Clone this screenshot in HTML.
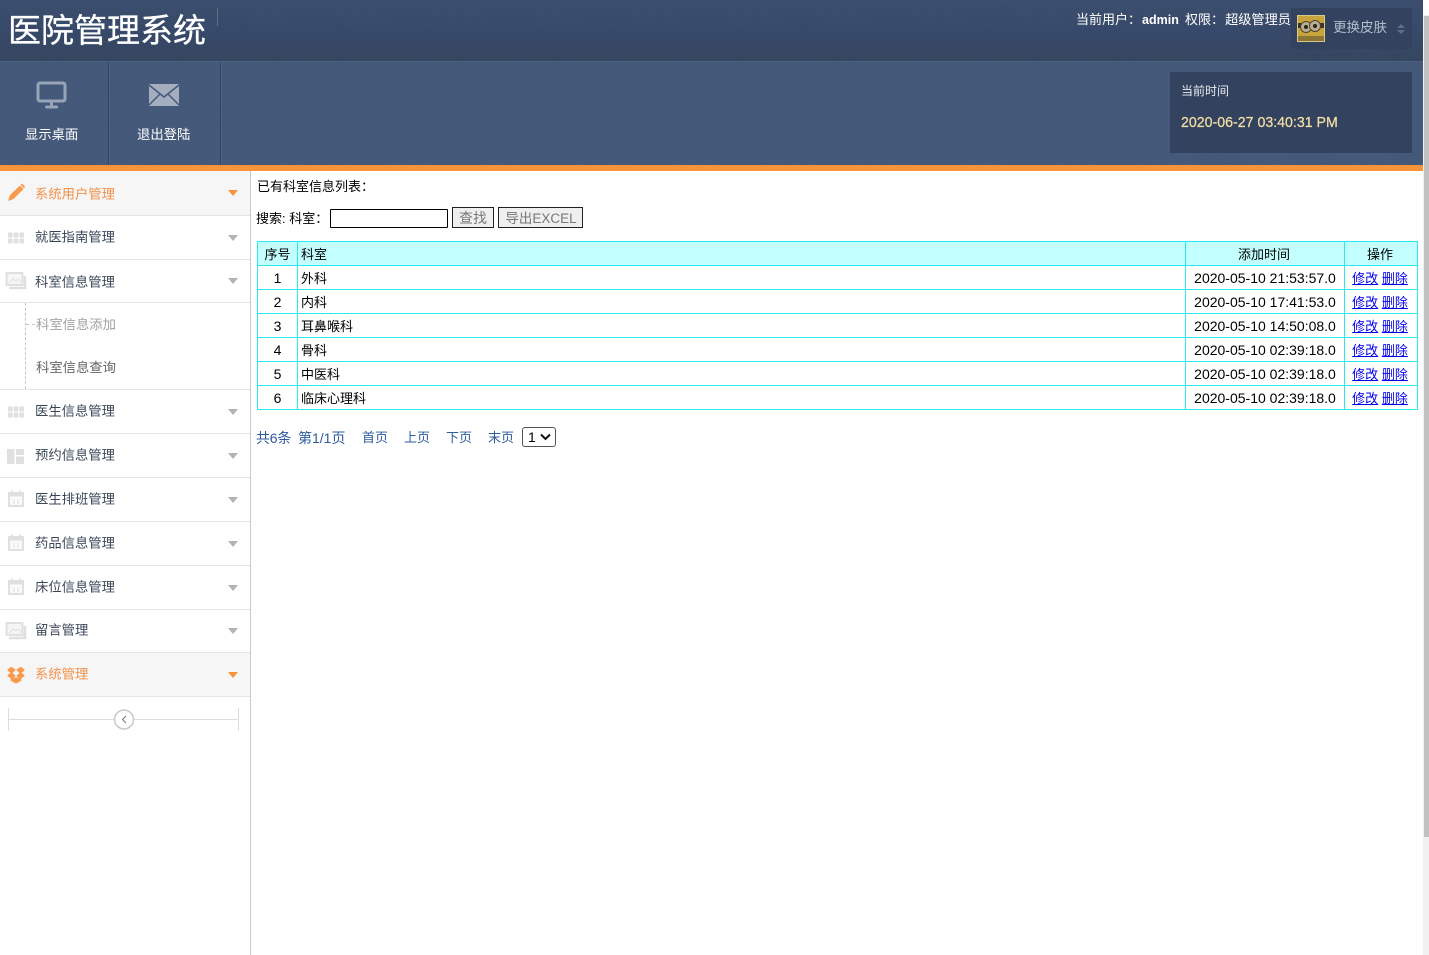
<!DOCTYPE html>
<html lang="zh-CN">
<head>
<meta charset="utf-8">
<title>医院管理系统</title>
<style>
*{box-sizing:border-box}
html,body{margin:0;padding:0;width:1429px;height:955px;overflow:hidden;background:#fff;font-family:"Liberation Sans","Noto Sans CJK SC",sans-serif;font-size:13px;color:#000}
.abs{position:absolute;white-space:nowrap}
#top{position:absolute;left:0;top:0;width:1423px;height:61px;background:repeating-linear-gradient(45deg,rgba(255,255,255,.018) 0 1px,rgba(0,0,0,.018) 1px 2px),linear-gradient(#3b4d6d,#36486a 50%,#34455f)}
#bar{position:absolute;left:0;top:61px;width:1423px;height:104px;background:repeating-linear-gradient(45deg,rgba(255,255,255,.025) 0 1px,rgba(0,0,0,.025) 1px 2px),#43587a;border-top:1px solid #4d6180}
#orange{position:absolute;left:0;top:165px;width:1423px;height:6px;background:#f79439}
.vl{position:absolute;width:1px;background:#34456a;box-shadow:1px 0 0 #4d6288}
#side{position:absolute;left:0;top:171px;width:251px;height:784px;background:#fff;border-right:1px solid #c8c8c8}
.m{position:absolute;left:0;width:250px;border-bottom:1px solid #e5e5e5;color:#3a4658;font-size:13.33px}
.m.on{background:#f6f6f6;color:#f2914a}
.m span{position:absolute;left:35px;top:50%;transform:translateY(-50%);margin-top:-2px;white-space:nowrap}
.m i{position:absolute;left:228px;top:50%;margin-top:-3px;width:0;height:0;border-left:5.5px solid transparent;border-right:5.5px solid transparent;border-top:6px solid #b3b3b3}
.m.on i{border-top-color:#f79439}
.m svg{position:absolute;left:5px;top:50%;margin-top:-11px}
table{position:absolute;left:257px;top:241px;width:1161px;border-collapse:separate;border-spacing:0;table-layout:fixed;font-size:13px}
td{height:24px;padding:1px 3px 0;white-space:nowrap;line-height:21px;overflow:hidden}
tr:first-child td{background:#c4ffff;height:25px;padding-top:2px}
tr:first-child td:first-child{font-size:13px}
tr+tr td:first-child{font-size:14px;padding-top:0;line-height:22px}
.c{text-align:center}
.d{font-size:14px;padding-top:0;padding-right:4px;line-height:22px}
.e{padding-right:6px}
td a{color:#0000ee;text-decoration:underline}
.h{position:absolute;left:257px;width:1161px;height:1px;background:#2de8ec}
.w{position:absolute;top:241px;width:1px;height:169px;background:#2de8ec}
.pg{position:absolute;top:429px;color:#2e5a9e;font-size:13px;line-height:18px;white-space:nowrap}
.btn{position:absolute;top:207px;height:21px;background:#efefef;border:1px solid #222;color:#777;line-height:20px;text-align:center;white-space:nowrap}
#sb{position:absolute;left:1423px;top:0;width:6px;height:955px;background:#f1f1f1}
#sbt{position:absolute;left:1424px;top:16px;width:5px;height:821px;background:#c1c1c1}
</style>
</head>
<body>
<div id="top"></div>
<div id="bar"></div>
<div id="orange"></div>
<div class="vl" style="left:108px;top:62px;height:103px"></div>
<div class="vl" style="left:220px;top:62px;height:103px"></div>
<div class="vl" style="left:217px;top:8px;height:18px;background:#5c6d88;box-shadow:none"></div>

<div class="abs" style="left:8px;top:10px;font-size:33px;line-height:42px;color:#fff;-webkit-text-stroke:.3px #fff">医院管理系统</div>

<svg class="abs" style="left:36px;top:81px" width="32" height="28" viewBox="0 0 32 28"><rect x="2" y="2" width="27" height="18" rx="2" fill="none" stroke="#98a4b8" stroke-width="3"/><rect x="14" y="20" width="3" height="5" fill="#98a4b8"/><rect x="9" y="24.500" width="13" height="3" rx="1.500" fill="#98a4b8"/></svg>
<svg class="abs" style="left:149px;top:84px" width="30" height="23" viewBox="0 0 30 23"><rect width="30" height="22" fill="#a4aebf"/><path d="M0 1L15 13L30 1M0 21L11 10M30 21L19 10" fill="none" stroke="#43587a" stroke-width="1.500"/></svg>
<div class="abs" style="left:25px;top:126px;color:#fff;font-size:13.33px;line-height:18px">显示桌面</div>
<div class="abs" style="left:137px;top:126px;color:#fff;font-size:13.33px;line-height:18px">退出登陆</div>

<div class="abs" style="left:1076px;top:11px;color:#fff;font-size:13px;line-height:18px">当前用户：<b style="font-weight:700;font-size:12.500px;margin-left:1px;margin-right:-1px">admin</b>&nbsp; 权限：<span style="font-size:13.2px;margin-left:1px">超级管理员</span></div>
<div class="abs" style="left:1291px;top:8px;width:121px;height:41px;background:#33425f"></div>
<svg class="abs" style="left:1297px;top:15px" width="28" height="27" viewBox="0 0 28 27"><rect width="28" height="27" fill="#d8c98a"/><rect x="1" y="1" width="26" height="25" fill="#c9a43c"/><rect x="1" y="8" width="26" height="5" fill="#3c3322"/><circle cx="9" cy="12" r="5.500" fill="#b9ae94" stroke="#4d4630"/><circle cx="18" cy="11" r="5.500" fill="#b9ae94" stroke="#4d4630"/><circle cx="9" cy="12" r="2" fill="#2a2416"/><circle cx="18" cy="11" r="2" fill="#2a2416"/><rect x="1" y="21" width="26" height="5" fill="#8b7434"/></svg>
<div class="abs" style="left:1333px;top:19px;color:#b4bdcb;font-size:13.500px;line-height:18px">更换皮肤</div>
<div class="abs" style="left:1397px;top:24px;width:0;height:0;border-left:4px solid transparent;border-right:4px solid transparent;border-bottom:4px solid #5f6f8a"></div>
<div class="abs" style="left:1397px;top:30px;width:0;height:0;border-left:4px solid transparent;border-right:4px solid transparent;border-top:4px solid #5f6f8a"></div>

<div class="abs" style="left:1170px;top:72px;width:242px;height:81px;background:#33425f"></div>
<div class="abs" style="left:1181px;top:83px;color:#e8ebf0;font-size:12px;line-height:17px">当前时间</div>
<div class="abs" style="left:1181px;top:114px;color:#f2dfa4;font-size:15px;line-height:18px;transform:scaleX(.945);transform-origin:0 0;-webkit-text-stroke:.25px #f2dfa4">2020-06-27 03:40:31 PM</div>

<div id="side"></div>
<div class="m on" style="top:171px;height:45px"><svg width="22" height="22" viewBox="0 0 22 22"><path d="M3 19L5 13L15 3.500L18.500 7L8.500 17Z" fill="#f79a4c"/><path d="M15.500 2.500L17 1.500L20 4.500L19 6.500Z" fill="#f79a4c"/></svg><span style="margin-top:0">系统用户管理</span><i></i></div>
<div class="m" style="top:216px;height:44px"><svg width="22" height="22" viewBox="0 0 22 22" fill="#e0e0e0"><rect x="3" y="5.500" width="4.600" height="5"/><rect x="8.700" y="5.500" width="4.600" height="5"/><rect x="14.400" y="5.500" width="4.600" height="5"/><rect x="3" y="11.500" width="4.600" height="5"/><rect x="8.700" y="11.500" width="4.600" height="5"/><rect x="14.400" y="11.500" width="4.600" height="5"/></svg><span>就医指南管理</span><i></i></div>
<div class="m" style="top:260px;height:43px"><svg width="22" height="22" viewBox="0 0 22 22" fill="none" stroke="#e0e0e0"><path d="M4 18H20V6" stroke-width="2.500"/><rect x="1.500" y="3" width="16" height="12" stroke-width="2" fill="#f5f5f5"/><path d="M4 13L8 9L11 11L13 9L16 12" stroke-width="1"/></svg><span style="margin-top:0">科室信息管理</span><i></i></div>
<div class="abs" style="left:25px;top:303px;height:86px;border-left:1px dashed #c6c6c6"></div>
<div class="abs" style="left:26px;top:324px;width:9px;border-top:1px dashed #c6c6c6"></div>
<div class="abs" style="left:36px;top:316px;color:#a3a3a3;font-size:13.33px;line-height:18px">科室信息添加</div>
<div class="abs" style="left:36px;top:359px;color:#666;font-size:13.33px;line-height:18px">科室信息查询</div>
<div class="abs" style="left:0;top:389px;width:250px;border-top:1px solid #e5e5e5"></div>
<div class="m" style="top:390px;height:44px"><svg width="22" height="22" viewBox="0 0 22 22" fill="#e0e0e0"><rect x="3" y="5.500" width="4.600" height="5"/><rect x="8.700" y="5.500" width="4.600" height="5"/><rect x="14.400" y="5.500" width="4.600" height="5"/><rect x="3" y="11.500" width="4.600" height="5"/><rect x="8.700" y="11.500" width="4.600" height="5"/><rect x="14.400" y="11.500" width="4.600" height="5"/></svg><span>医生信息管理</span><i></i></div>
<div class="m" style="top:434px;height:44px"><svg width="22" height="22" viewBox="0 0 22 22" fill="#e0e0e0"><rect x="2" y="4" width="7.500" height="15"/><rect x="11" y="4" width="8" height="6"/><rect x="11" y="11.500" width="8" height="7.500"/></svg><span>预约信息管理</span><i></i></div>
<div class="m" style="top:478px;height:44px"><svg width="22" height="22" viewBox="0 0 22 22" fill="#fafafa" stroke="#e0e0e0" stroke-width="2"><rect x="4" y="4" width="14" height="13"/><path d="M4 6H18" stroke-width="3"/><path d="M7 1.500V4M15 1.500V4"/><path d="M9 10V15M13 10V15" stroke-width="1"/></svg><span>医生排班管理</span><i></i></div>
<div class="m" style="top:522px;height:44px"><svg width="22" height="22" viewBox="0 0 22 22" fill="#fafafa" stroke="#e0e0e0" stroke-width="2"><rect x="4" y="4" width="14" height="13"/><path d="M4 6H18" stroke-width="3"/><path d="M7 1.500V4M15 1.500V4"/><path d="M9 10V15M13 10V15" stroke-width="1"/></svg><span>药品信息管理</span><i></i></div>
<div class="m" style="top:566px;height:44px"><svg width="22" height="22" viewBox="0 0 22 22" fill="#fafafa" stroke="#e0e0e0" stroke-width="2"><rect x="4" y="4" width="14" height="13"/><path d="M4 6H18" stroke-width="3"/><path d="M7 1.500V4M15 1.500V4"/><path d="M9 10V15M13 10V15" stroke-width="1"/></svg><span>床位信息管理</span><i></i></div>
<div class="m" style="top:610px;height:43px"><svg width="22" height="22" viewBox="0 0 22 22" fill="none" stroke="#e0e0e0"><path d="M4 18H20V6" stroke-width="2.500"/><rect x="1.500" y="3" width="16" height="12" stroke-width="2" fill="#f5f5f5"/><path d="M4 13L8 9L11 11L13 9L16 12" stroke-width="1"/></svg><span>留言管理</span><i></i></div>
<div class="m on" style="top:653px;height:44px"><svg width="22" height="22" viewBox="0 0 22 22" fill="#f79a4c" stroke="#f79a4c" stroke-width="2" stroke-linejoin="round"><path d="M3.500 6L6.500 4L9.500 6L6.500 8.500Z"/><path d="M18.500 6L15.500 4L12.500 6L15.500 8.500Z"/><path d="M3.500 11.500L6.500 9.500L9.500 12L6.500 14Z"/><path d="M18.500 11.500L15.500 9.500L12.500 12L15.500 14Z"/><path d="M6.500 16L11 14.500L15.500 16L11 18.500Z"/></svg><span>系统管理</span><i></i></div>

<div class="abs" style="left:8px;top:708px;height:23px;border-left:1px solid #ddd"></div>
<div class="abs" style="left:238px;top:708px;height:23px;border-left:1px solid #ddd"></div>
<div class="abs" style="left:8px;top:719px;width:230px;border-top:1px solid #ddd"></div>
<svg class="abs" style="left:113px;top:708px" width="22" height="22" viewBox="0 0 22 22"><circle cx="11" cy="11.500" r="9.500" fill="#fff" stroke="#c9c9c9" stroke-width="1.500"/><path d="M13 8L9.500 11.500L13 15" fill="none" stroke="#777" stroke-width="1"/></svg>

<div class="abs" style="left:257px;top:178px;font-size:13px;line-height:18px">已有科室信息列表：</div>
<div class="abs" style="left:256px;top:210px;font-size:13px;line-height:18px">搜索: 科室：</div>
<div class="abs" style="left:330px;top:209px;width:118px;height:19px;border:1px solid #000;border-radius:1px;background:#fff"></div>
<div class="btn" style="left:452px;width:42px;font-size:14px">查找</div>
<div class="btn" style="left:498px;width:85px;font-size:13.500px;line-height:21px;padding-left:1px">导出EXCEL</div>

<table>
<colgroup><col style="width:41px"><col style="width:888px"><col style="width:159px"><col style="width:73px"></colgroup>
<tr><td class="c">序号</td><td>科室</td><td class="c e">添加时间</td><td class="c e">操作</td></tr>
<tr><td class="c">1</td><td>外科</td><td class="c d">2020-05-10 21:53:57.0</td><td class="c e"><a>修改</a> <a>删除</a></td></tr>
<tr><td class="c">2</td><td>内科</td><td class="c d">2020-05-10 17:41:53.0</td><td class="c e"><a>修改</a> <a>删除</a></td></tr>
<tr><td class="c">3</td><td>耳鼻喉科</td><td class="c d">2020-05-10 14:50:08.0</td><td class="c e"><a>修改</a> <a>删除</a></td></tr>
<tr><td class="c">4</td><td>骨科</td><td class="c d">2020-05-10 02:39:18.0</td><td class="c e"><a>修改</a> <a>删除</a></td></tr>
<tr><td class="c">5</td><td>中医科</td><td class="c d">2020-05-10 02:39:18.0</td><td class="c e"><a>修改</a> <a>删除</a></td></tr>
<tr><td class="c">6</td><td>临床心理科</td><td class="c d">2020-05-10 02:39:18.0</td><td class="c e"><a>修改</a> <a>删除</a></td></tr>
</table>
<div class="h" style="top:241px"></div>
<div class="h" style="top:265px"></div>
<div class="h" style="top:289px"></div>
<div class="h" style="top:313px"></div>
<div class="h" style="top:337px"></div>
<div class="h" style="top:361px"></div>
<div class="h" style="top:385px"></div>
<div class="h" style="top:409px"></div>
<div class="w" style="left:257px"></div>
<div class="w" style="left:297px"></div>
<div class="w" style="left:1185px"></div>
<div class="w" style="left:1344px"></div>
<div class="w" style="left:1417px"></div>

<div class="pg" style="left:256px;font-size:14px;letter-spacing:-.2px">共6条</div>
<div class="pg" style="left:298px;font-size:14px">第1/1页</div>
<div class="pg" style="left:362px">首页</div>
<div class="pg" style="left:404px">上页</div>
<div class="pg" style="left:446px">下页</div>
<div class="pg" style="left:488px">末页</div>
<div class="abs" style="left:522px;top:427px;width:34px;height:20px;border:1px solid #555;border-radius:3px;background:#fff;font-size:14px;line-height:18px;padding-left:5px">1</div>
<svg class="abs" style="left:540px;top:433px" width="11" height="8" viewBox="0 0 11 8"><path d="M1 1.500L5.500 6L10 1.500" fill="none" stroke="#111" stroke-width="2"/></svg>

<div id="sb"></div>
<div class="abs" style="left:1423px;top:0;width:6px;height:15px;background:#fff"></div>
<div id="sbt"></div>
</body>
</html>
